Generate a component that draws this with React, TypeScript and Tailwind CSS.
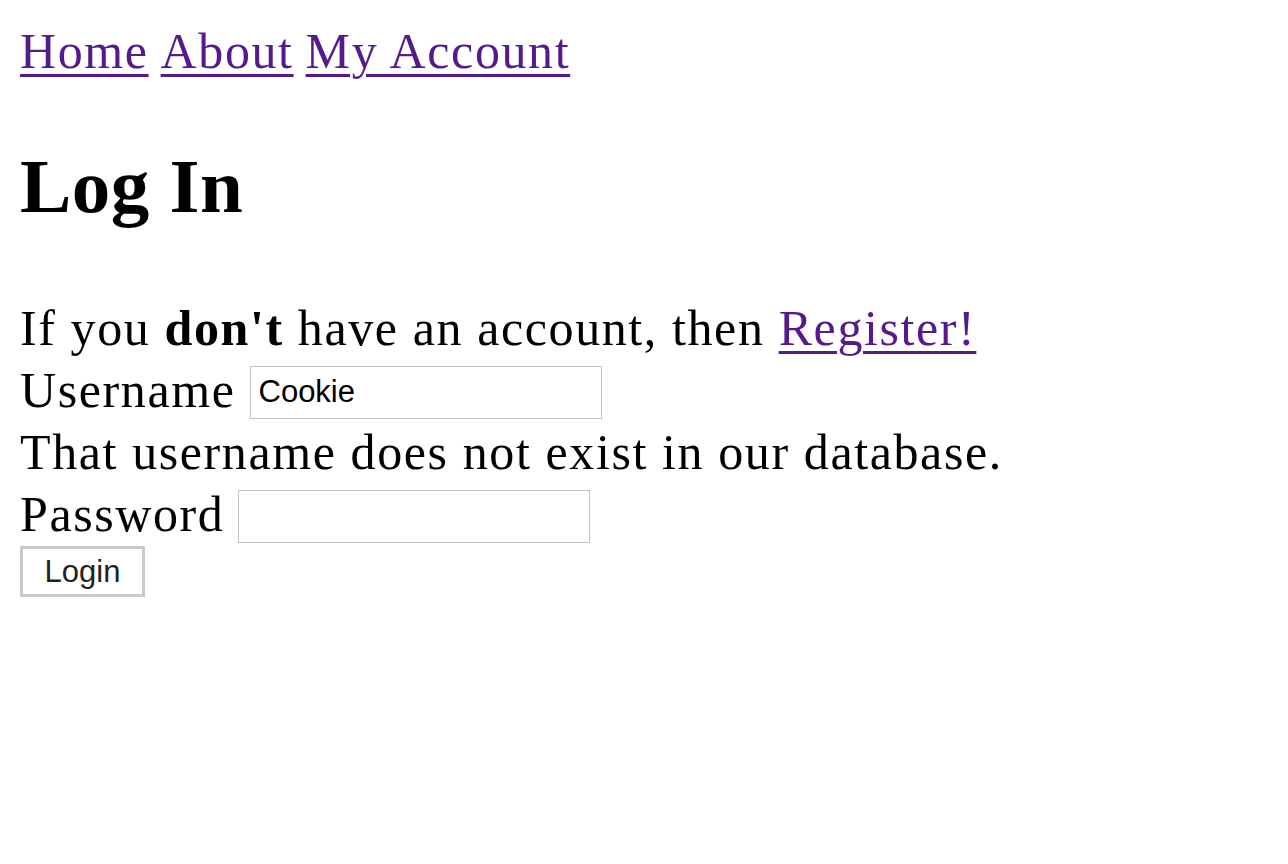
import { useState } from "react";

const links = ["Home", "About", "My Account"];

const App = () => {
  const [username, setUsername] = useState("Cookie");
  const [password, setPassword] = useState("");

  return (
    <div className="min-h-screen bg-white px-5 pt-5 text-black font-['Liberation_Serif',serif] text-[50px] leading-[62px] tracking-[1.6px]">
      {/* nav */}
      <nav className="flex gap-3">
        {links.map((l) => (
          <a
            key={l}
            href="#"
            className="text-[#551a8b] underline decoration-[3px] underline-offset-[6px]"
          >
            {l}
          </a>
        ))}
      </nav>

      <h1 className="mt-[66px] text-[77px] leading-[77px] font-bold tracking-[0.5px]">Log In</h1>

      <form className="mt-[72px]" onSubmit={(e) => e.preventDefault()}>
        <p>
          If you <b>don't</b> have an account, then{" "}
          <a href="#" className="text-[#551a8b] underline decoration-[3px] underline-offset-[6px]">
            Register!
          </a>
        </p>

        <div className="flex h-[62px] items-center gap-[14px]">
          <label htmlFor="username">Username</label>
          <input
            id="username"
            value={username}
            onChange={(e) => setUsername(e.target.value)}
            className="mt-1 h-[53px] w-[352px] border border-[#c4c4c4] px-2 text-[31px] tracking-normal font-['Liberation_Sans',sans-serif] outline-none"
          />
        </div>

        <p>That username does not exist in our database.</p>

        <div className="flex h-[62px] items-center gap-[14px]">
          <label htmlFor="password">Password</label>
          <input
            id="password"
            type="password"
            value={password}
            onChange={(e) => setPassword(e.target.value)}
            className="mt-1 h-[53px] w-[352px] border border-[#c4c4c4] px-2 text-[31px] tracking-normal font-['Liberation_Sans',sans-serif] outline-none"
          />
        </div>

        <button
          type="submit"
          className="mt-[1px] block h-[51px] w-[125px] border-[3px] border-[#cacaca] bg-white text-[31px] leading-none tracking-normal text-[#222] font-['Liberation_Sans',sans-serif]"
        >
          Login
        </button>
      </form>
    </div>
  );
};

export default App;
